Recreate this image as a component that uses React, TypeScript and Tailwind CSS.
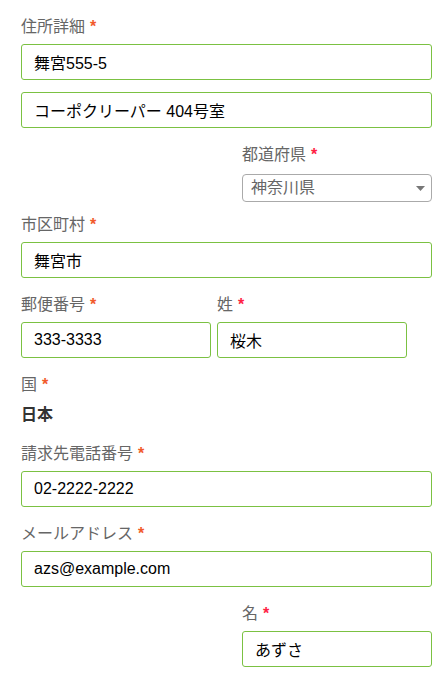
import React from 'react';

// Address form, JP locale
const FONT = "font-['Liberation_Sans','Noto_Sans_CJK_JP',sans-serif]";

const Label = ({ text, red = false, className = '' }: { text: string; red?: boolean; className?: string }) => (
  <div className={`h-[20px] leading-[20px] text-[16px] text-[#666666] whitespace-nowrap ${className}`}>
    {text}
    <span className={`ml-[5px] font-bold ${red ? 'text-[#ff2244]' : 'text-[#f15a2b]'}`}>*</span>
  </div>
);

const TextInput = ({ value, className = 'w-[411px]' }: { value: string; className?: string }) => (
  <input
    readOnly
    value={value}
    className={`block h-[36px] rounded-[3px] border border-[#7bc142] bg-white px-[12px] text-[16px] text-black outline-none ${FONT} ${className}`}
  />
);

export default function App() {
  return (
    <div className={`w-[448px] h-[687px] bg-white pl-[21px] pt-[17px] ${FONT}`}>
      {/* 住所詳細 */}
      <Label text="住所詳細" className="mb-[7px]" />
      <TextInput value="舞宮555-5" />
      <TextInput value="コーポクリーパー 404号室" className="w-[411px] mt-[12px]" />

      {/* 都道府県 */}
      <div className="ml-[221px] mt-[17px] w-[190px]">
        <Label text="都道府県" red className="mb-[9px]" />
        <div className="flex h-[28px] items-center justify-between rounded-[4px] border border-[#aaaaaa] pl-[8px] pr-[6px]">
          <span className="text-[16px] text-[#666666]">神奈川県</span>
          <svg width="9" height="5" viewBox="0 0 9 5">
            <path d="M0 0h9L4.5 5z" fill="#777777" />
          </svg>
        </div>
      </div>

      {/* 市区町村 */}
      <Label text="市区町村" className="mt-[13px] mb-[7px]" />
      <TextInput value="舞宮市" />

      {/* 郵便番号 / 姓 */}
      <div className="mt-[17px] flex gap-[6px]">
        <div className="w-[190px]">
          <Label text="郵便番号" className="mb-[7px]" />
          <TextInput value="333-3333" className="w-[190px]" />
        </div>
        <div className="w-[190px]">
          <Label text="姓" red className="mb-[7px]" />
          <TextInput value="桜木" className="w-[190px]" />
        </div>
      </div>

      {/* 国 */}
      <Label text="国" className="mt-[17px]" />
      <div className="mt-[10px] h-[20px] leading-[20px] text-[16px] font-bold text-[#333333]">日本</div>

      {/* 請求先電話番号 */}
      <Label text="請求先電話番号" className="mt-[19px] mb-[7px]" />
      <TextInput value="02-2222-2222" />

      {/* メールアドレス */}
      <Label text="メールアドレス" className="mt-[17px] mb-[7px]" />
      <TextInput value="azs@example.com" />

      {/* 名 */}
      <div className="ml-[221px] mt-[17px] w-[190px]">
        <Label text="名" red className="mb-[7px]" />
        <TextInput value="あずさ" className="w-[190px]" />
      </div>
    </div>
  );
}
